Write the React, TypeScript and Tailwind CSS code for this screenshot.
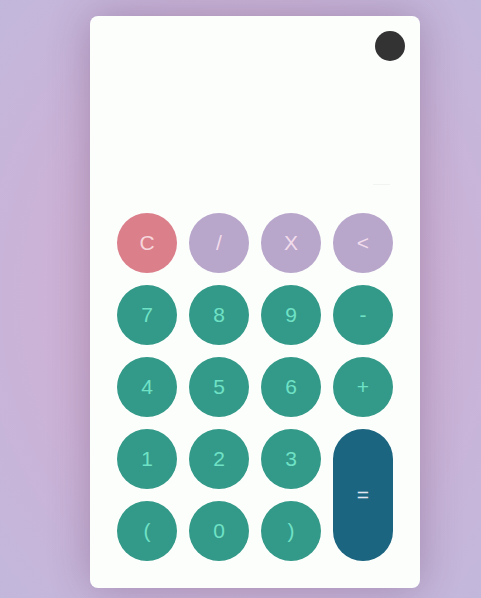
const rows: { label: string; kind: "clear" | "op" | "num" }[] = [
  { label: "C", kind: "clear" },
  { label: "/", kind: "op" },
  { label: "X", kind: "op" },
  { label: "<", kind: "op" },
  { label: "7", kind: "num" },
  { label: "8", kind: "num" },
  { label: "9", kind: "num" },
  { label: "-", kind: "num" },
  { label: "4", kind: "num" },
  { label: "5", kind: "num" },
  { label: "6", kind: "num" },
  { label: "+", kind: "num" },
];

const styles = {
  clear: "bg-[#db7f8b] text-[#f6d6dc]",
  op: "bg-[#b8a6cb] text-[#f3dcec]",
  num: "bg-[#339988] text-[#6fe2c6]",
};

function Key({ label, kind }: { label: string; kind: "clear" | "op" | "num" }) {
  return (
    <button className={`h-[60px] w-[60px] rounded-full flex items-center justify-center text-[21px] ${styles[kind]}`}>
      {label}
    </button>
  );
}

export default function App() {
  return (
    <div
      className="min-h-[598px] w-full flex pl-[90px] pt-[16px] bg-[radial-gradient(ellipse_at_center,#d6b0d2_0%,#ccb2d6_55%,#c2b8dc_100%)]"
      style={{ fontFamily: '"Liberation Sans", Arial, sans-serif' }}
    >
      <div className="w-[330px] h-[572px] bg-[#fcfefc] rounded-[8px] shadow-[0_0_40px_rgba(80,40,80,0.3)] flex flex-col pt-[15px] px-[15px]">
        <div className="flex justify-end">
          <div className="h-[30px] w-[30px] rounded-full bg-[#333333]" />
        </div>
        <div className="h-[152px] mx-[12px] flex flex-col justify-end items-end pb-[28px] pr-[3px]">
          <div className="h-px w-[17px] bg-[#f1f5f1]" />
        </div>
        <div className="mx-[12px] grid grid-cols-4 gap-[12px]">
          {rows.map((k) => (
            <Key key={k.label} label={k.label} kind={k.kind} />
          ))}
          <Key label="1" kind="num" />
          <Key label="2" kind="num" />
          <Key label="3" kind="num" />
          <button className="row-span-2 w-[60px] h-[132px] rounded-full bg-[#1b6580] text-[#e4e6f0] text-[21px] flex items-center justify-center">
            =
          </button>
          <Key label="(" kind="num" />
          <Key label="0" kind="num" />
          <Key label=")" kind="num" />
        </div>
      </div>
    </div>
  );
}
